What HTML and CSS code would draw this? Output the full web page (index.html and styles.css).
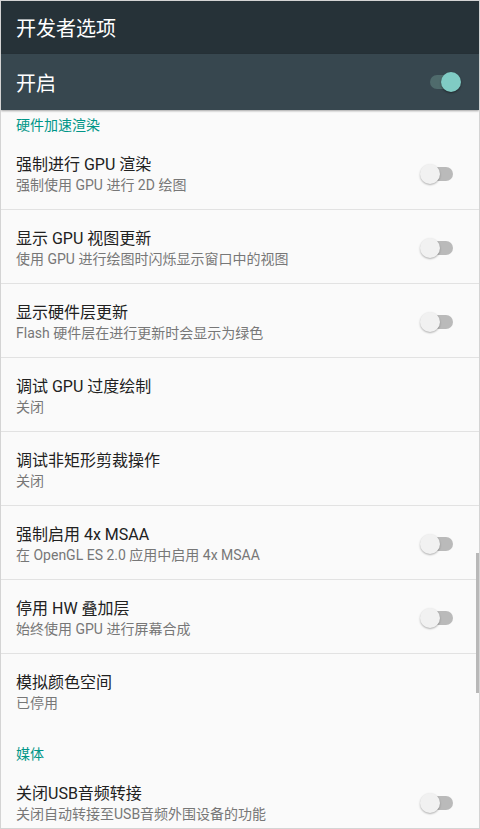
FILE: index.html
```html
<!DOCTYPE html>
<html lang="zh-CN">
<head>
    <meta charset="UTF-8">
    <meta name="viewport" content="width=device-width, initial-scale=1.0">
    <title>开发者选项</title>
    <link rel="stylesheet" href="styles.css">
</head>
<body>
    <div class="screen">
        <div class="toolbar">开发者选项</div>

        <div class="master">
            <span class="master-title">开启</span>
            <span class="switch on"><span class="track"></span><span class="thumb"></span></span>
        </div>

        <div class="list">
            <div class="category first">硬件加速渲染</div>

            <div class="item">
                <div class="text">
                    <div class="title">强制进行 GPU 渲染</div>
                    <div class="summary">强制使用 GPU 进行 2D 绘图</div>
                </div>
                <span class="switch"><span class="track"></span><span class="thumb"></span></span>
            </div>
            <div class="item">
                <div class="text">
                    <div class="title">显示 GPU 视图更新</div>
                    <div class="summary">使用 GPU 进行绘图时闪烁显示窗口中的视图</div>
                </div>
                <span class="switch"><span class="track"></span><span class="thumb"></span></span>
            </div>
            <div class="item">
                <div class="text">
                    <div class="title">显示硬件层更新</div>
                    <div class="summary">Flash 硬件层在进行更新时会显示为绿色</div>
                </div>
                <span class="switch"><span class="track"></span><span class="thumb"></span></span>
            </div>
            <div class="item">
                <div class="text">
                    <div class="title">调试 GPU 过度绘制</div>
                    <div class="summary">关闭</div>
                </div>
            </div>
            <div class="item">
                <div class="text">
                    <div class="title">调试非矩形剪裁操作</div>
                    <div class="summary">关闭</div>
                </div>
            </div>
            <div class="item">
                <div class="text">
                    <div class="title">强制启用 4x MSAA</div>
                    <div class="summary">在 OpenGL ES 2.0 应用中启用 4x MSAA</div>
                </div>
                <span class="switch"><span class="track"></span><span class="thumb"></span></span>
            </div>
            <div class="item">
                <div class="text">
                    <div class="title">停用 HW 叠加层</div>
                    <div class="summary">始终使用 GPU 进行屏幕合成</div>
                </div>
                <span class="switch"><span class="track"></span><span class="thumb"></span></span>
            </div>
            <div class="item last">
                <div class="text">
                    <div class="title">模拟颜色空间</div>
                    <div class="summary">已停用</div>
                </div>
            </div>

            <div class="category">媒体</div>

            <div class="item">
                <div class="text">
                    <div class="title">关闭USB音频转接</div>
                    <div class="summary">关闭自动转接至USB音频外围设备的功能</div>
                </div>
                <span class="switch"><span class="track"></span><span class="thumb"></span></span>
            </div>

            <div class="scrollbar"></div>
        </div>
    </div>
</body>
</html>
```

FILE: styles.css
```css
/* 整体 */
body {
    margin: 0;
    font-family: Roboto, "Noto Sans CJK SC", sans-serif;
    background-color: #fafafa;
}

.screen {
    width: 480px;
    height: 829px;
    box-sizing: border-box;
    border: 1px solid #d4d4d4;
    display: flex;
    flex-direction: column;
    overflow: hidden;
    background-color: #fafafa;
}

/* 顶部标题栏 */
.toolbar {
    height: 53px;
    flex-shrink: 0;
    padding: 0 15px;
    display: flex;
    align-items: center;
    background-color: #263238;
    color: #fff;
    font-size: 20px;
}

/* 总开关 */
.master {
    height: 56px;
    flex-shrink: 0;
    padding: 0 18px 0 15px;
    display: flex;
    align-items: center;
    justify-content: space-between;
    background-color: #37474f;
    color: #fff;
    font-size: 20px;
    box-shadow: 0 1px 2px rgba(0, 0, 0, 0.35);
    position: relative;
    z-index: 1;
}

/* 列表 */
.list {
    flex: 1;
    overflow: hidden;
    position: relative;
}

.category {
    height: 37px;
    box-sizing: border-box;
    padding: 16px 15px 0;
    line-height: 20px;
    font-size: 14px;
    color: #009688;
}

.category.first {
    margin-top: -11px;
}

.item {
    height: 74px;
    box-sizing: border-box;
    padding: 19px 25px 0 15px;
    display: flex;
    justify-content: space-between;
    border-bottom: 1px solid #e2e2e2;
}

.item.last {
    border-bottom: none;
}

.title {
    font-size: 16px;
    line-height: 20px;
    color: #212121;
}

.summary {
    font-size: 14px;
    line-height: 20px;
    color: #777;
}

/* 开关 */
.switch {
    width: 34px;
    height: 20px;
    position: relative;
    flex-shrink: 0;
    margin-top: 9px;
}

.master .switch {
    margin-top: 0;
}

.track {
    position: absolute;
    left: 3px;
    top: 3px;
    width: 30px;
    height: 14px;
    border-radius: 7px;
    background-color: #bababa;
}

.thumb {
    position: absolute;
    left: 0;
    top: 0;
    width: 20px;
    height: 20px;
    border-radius: 50%;
    background-color: #f1f1f1;
    box-shadow: 0 1px 2px rgba(0, 0, 0, 0.3);
}

.switch.on .track {
    background-color: #4f6b6c;
}

.switch.on .thumb {
    left: auto;
    right: 0;
    background-color: #80cbc4;
    box-shadow: 0 1px 2px rgba(0, 0, 0, 0.45);
}

/* 滚动条 */
.scrollbar {
    position: absolute;
    right: 0;
    top: 443px;
    width: 3px;
    height: 140px;
    background-color: #b8b8b8;
}
```
